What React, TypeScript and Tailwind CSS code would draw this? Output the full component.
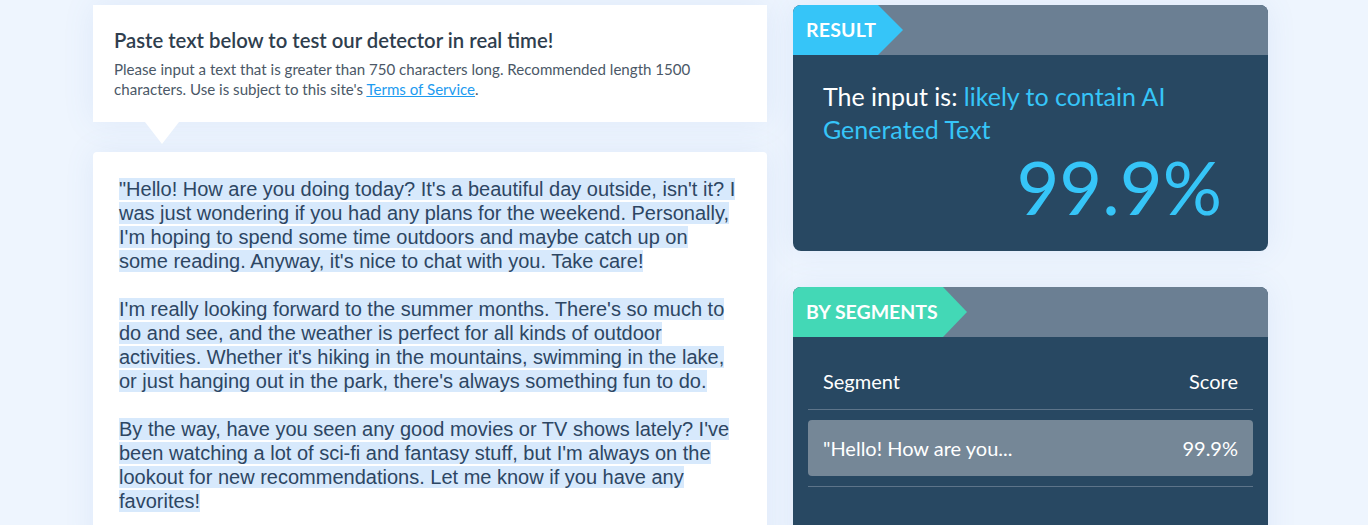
import React from "react";

const paras = [
  [
    "\"Hello! How are you doing today? It's a beautiful day outside, isn't it? I",
    "was just wondering if you had any plans for the weekend. Personally,",
    "I'm hoping to spend some time outdoors and maybe catch up on",
    "some reading. Anyway, it's nice to chat with you. Take care!",
  ],
  [
    "I'm really looking forward to the summer months. There's so much to",
    "do and see, and the weather is perfect for all kinds of outdoor",
    "activities. Whether it's hiking in the mountains, swimming in the lake,",
    "or just hanging out in the park, there's always something fun to do.",
  ],
  [
    "By the way, have you seen any good movies or TV shows lately? I've",
    "been watching a lot of sci-fi and fantasy stuff, but I'm always on the",
    "lookout for new recommendations. Let me know if you have any",
    "favorites!",
  ],
];

const sans = "font-['Lato','Open_Sans',sans-serif]";

export default function App() {
  return (
    <div className={`min-h-screen bg-[#eef5fe] ${sans} overflow-hidden`}>
      <div className="flex items-start gap-[26px] pl-[93px] pt-[5px]">
        {/* Left column */}
        <div className="flex w-[674px] flex-col">
          <div className="relative bg-white px-[21px] pb-[23px] pt-[23px] shadow-[0_0_30px_rgba(90,130,210,0.10)]">
            <h2 className="text-[20.3px] font-semibold leading-[24px] text-[#2f3e4e]">
              Paste text below to test our detector in real time!
            </h2>
            <p className="mt-[7px] whitespace-nowrap text-[15.1px] leading-[20px] text-[#4b5867]">
              Please input a text that is greater than 750 characters long. Recommended length 1500
              <br />
              characters. Use is subject to this site's{" "}
              <a className="text-[#1e9bf0] underline">Terms of Service</a>.
            </p>
            <div className="absolute left-[52px] top-full h-[22px] w-[34px] bg-white [clip-path:polygon(0_0,100%_0,50%_100%)]" />
          </div>
          <div className="mt-[30px] h-[400px] rounded-t-[4px] bg-white px-[26px] pt-[25px] shadow-[0_0_30px_rgba(90,130,210,0.10)]">
            <div className="font-['Liberation_Sans',Arial,sans-serif] text-[20px] leading-[24px] text-[#2d4663]">
              {paras.map((p, i) => (
                <div key={i} className={i > 0 ? "mt-[24px]" : ""}>
                  {p.map((l, j) => (
                    <div key={j} className="whitespace-nowrap">
                      <span className="bg-[#d7e9fc]">{l}</span>
                    </div>
                  ))}
                </div>
              ))}
            </div>
          </div>
        </div>

        {/* Right column */}
        <div className="flex w-[475px] flex-col gap-[36px]">
          <div className="overflow-hidden rounded-[8px] bg-[#284862] shadow-[0_0_30px_rgba(90,130,210,0.10)]">
            <div className="flex h-[50px] bg-[#6b7f93]">
              <div className="flex h-full w-[110px] items-center bg-[#36c5f8] pl-[13px] [clip-path:polygon(0_0,85px_0,100%_50%,85px_100%,0_100%)]">
                <span className="text-[19.5px] font-bold tracking-[0.2px] text-white">RESULT</span>
              </div>
            </div>
            <div className="pb-[27px] pl-[30px] pr-[46px] pt-[25px]">
              <p className="text-[25px] leading-[33px] text-white">
                The input is: <span className="text-[#36c5f8]">likely to contain AI Generated Text</span>
              </p>
              <div className="mt-[4px] text-right text-[74px] leading-[74px] text-[#36c5f8]">99.9%</div>
            </div>
          </div>

          <div className="h-[300px] overflow-hidden rounded-[8px] bg-[#284862] shadow-[0_0_30px_rgba(90,130,210,0.10)]">
            <div className="flex h-[50px] bg-[#6b7f93]">
              <div className="flex h-full w-[174px] items-center bg-[#43d8b6] pl-[13px] [clip-path:polygon(0_0,150px_0,100%_50%,150px_100%,0_100%)]">
                <span className="whitespace-nowrap text-[19.5px] font-bold text-white">BY SEGMENTS</span>
              </div>
            </div>
            <div className="px-[15px] pt-[15px]">
              <div className="flex h-[58px] items-center justify-between border-b border-[#5d7489] px-[15px] text-[20px] text-white">
                <span>Segment</span>
                <span>Score</span>
              </div>
              <div className="py-[10px]">
                <div className="flex h-[56px] items-center justify-between rounded-[4px] bg-[#758797] px-[15px] text-[20px] text-white">
                  <span>"Hello! How are you...</span>
                  <span>99.9%</span>
                </div>
              </div>
              <div className="border-t border-[#5d7489]" />
            </div>
          </div>
        </div>
      </div>
    </div>
  );
}
